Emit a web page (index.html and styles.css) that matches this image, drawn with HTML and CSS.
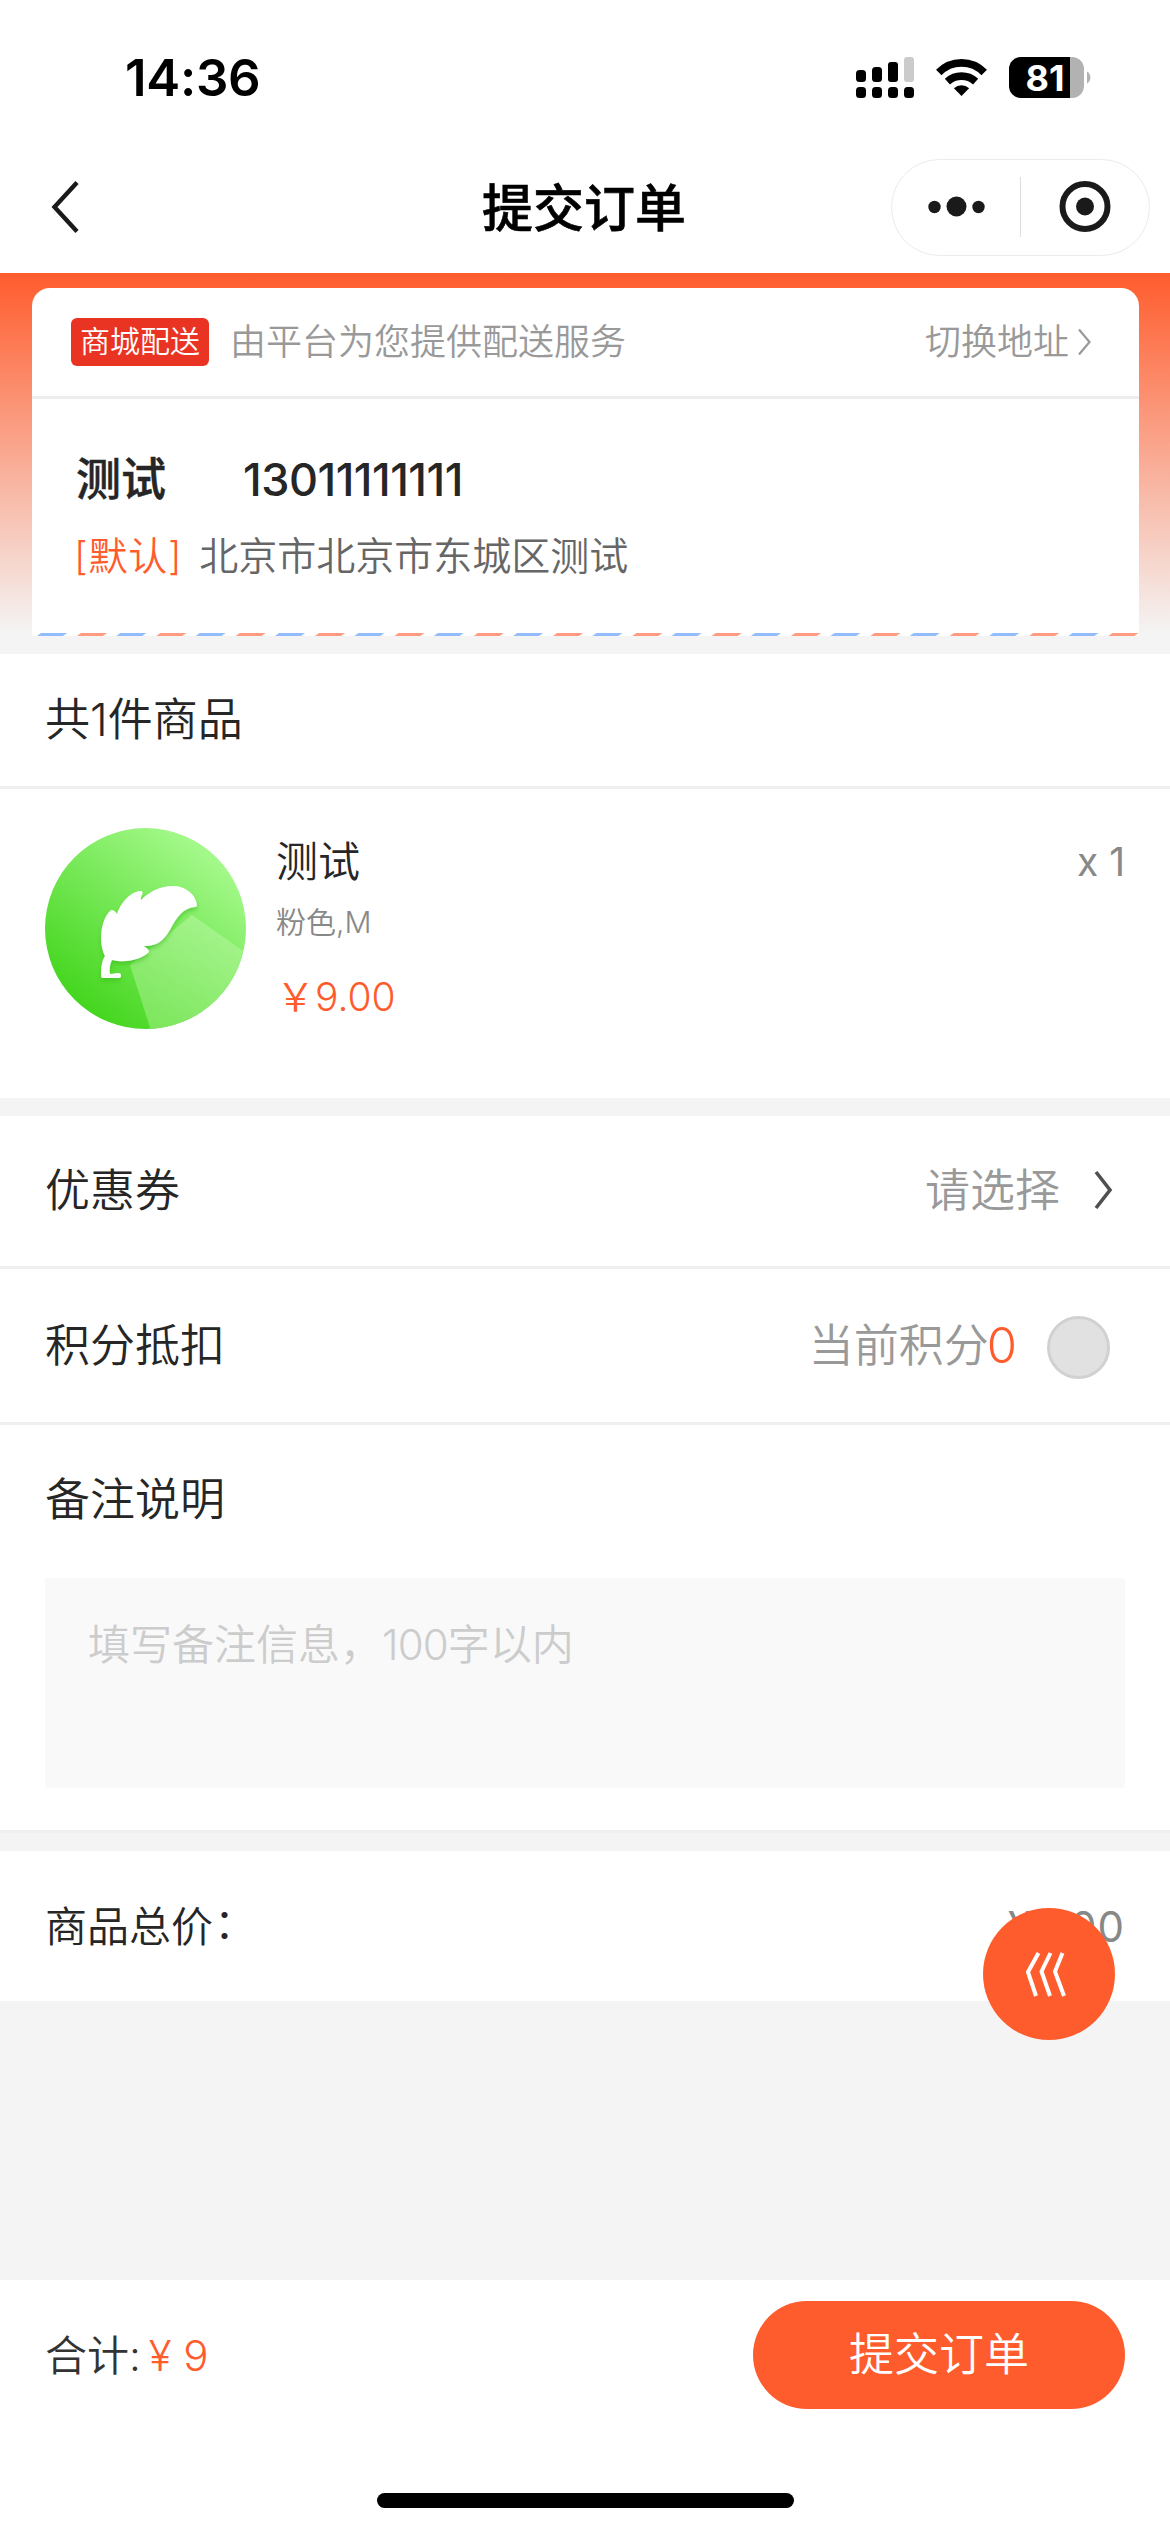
FILE: index.html
```html
<!DOCTYPE html>
<html lang="zh-CN">
<head>
<meta charset="utf-8">
<title>提交订单</title>
<link rel="stylesheet" href="styles.css">
</head>
<body>
<div class="page">
  <header class="top">
    <div class="status">
      <span class="time">14:36</span>
      <svg class="status-icons" width="240" height="50" viewBox="0 0 240 50">
        <g fill="#000">
          <rect x="4" y="17" width="10" height="12" rx="3.5"/>
          <rect x="20" y="14" width="10" height="15" rx="3.5"/>
          <rect x="36" y="9" width="10" height="20" rx="3"/>
          <rect x="52" y="4" width="10" height="25" rx="3" fill="#cbcbcb"/>
          <rect x="4" y="34" width="10" height="11" rx="3.5"/>
          <rect x="20" y="34" width="10" height="11" rx="3.5"/>
          <rect x="36" y="34" width="10" height="11" rx="3.5"/>
          <rect x="52" y="34" width="10" height="11" rx="3.5"/>
        </g>
        <g fill="none" stroke="#000" stroke-width="7.6">
          <path d="M86.800 19.500A31.500 31.500 0 0 1 132.200 19.500"/>
          <path d="M95.400 28.600A21 21 0 0 1 123.600 28.600"/>
        </g>
        <path d="M109.500 43l-7.600-7.800a11.600 11.600 0 0 1 15.200 0z"/>
        <clipPath id="cell"><rect x="157" y="4" width="75" height="41" rx="12"/></clipPath>
        <g clip-path="url(#cell)">
          <rect x="157" y="4" width="61" height="41"/>
          <rect x="218" y="4" width="14" height="41" fill="#b2b2b2"/>
        </g>
        <path d="M235 18.500a7 7 0 0 1 0 12z" fill="#b2b2b2"/>
        <text class="charge" x="193" y="38" text-anchor="middle">81</text>
      </svg>
    </div>
    <nav class="nav">
      <svg class="back" width="30" height="54" viewBox="0 0 30 54"><path d="M27 2.500L4.500 27L27 51.500" fill="none" stroke="#1a1a1a" stroke-width="4.400"/></svg>
      <h1 class="title">提交订单</h1>
      <div class="capsule">
        <svg width="128" height="60" viewBox="0 0 128 60" fill="#1a1a1a"><circle cx="42.500" cy="30" r="6.200"/><circle cx="64.500" cy="29.500" r="10"/><circle cx="86.500" cy="30" r="6.200"/></svg>
        <span class="capsule-line"></span>
        <svg width="127" height="60" viewBox="0 0 127 60"><circle cx="64" cy="29.500" r="22.500" fill="none" stroke="#1a1a1a" stroke-width="6"/><circle cx="64" cy="29.500" r="9" fill="#1a1a1a"/></svg>
      </div>
    </nav>
  </header>

  <section class="address-area">
    <div class="address-card">
      <div class="delivery">
        <span class="badge">商城配送</span>
        <span class="delivery-text">由平台为您提供配送服务</span>
        <span class="switch">切换地址</span>
        <svg class="switch-arrow" width="14" height="28" viewBox="0 0 14 28"><path d="M1 1.500L11.500 14L1 26.500" fill="none" stroke="#999" stroke-width="2.200"/></svg>
      </div>
      <div class="contact"><span class="name">测试</span><span class="phone">13011111111</span></div>
      <div class="address"><span class="default">[默认]</span><span>北京市北京市东城区测试</span></div>
      <svg class="mail-edge" width="1107" height="3" viewBox="0 0 1107 3">
        <defs><pattern id="mail" x="5" width="79.340" height="3" patternUnits="userSpaceOnUse">
          <path d="M4 0H30L26 3H0z" fill="#92bcfc"/><path d="M44 0H70L66 3H40z" fill="#ff9b81"/>
        </pattern></defs>
        <rect x="5" width="1102" height="3" fill="url(#mail)"/>
      </svg>
    </div>
  </section>

  <section class="goods-head">共1件商品</section>
  <section class="goods">
    <svg class="goods-pic" width="201" height="201" viewBox="0 0 201 201">
      <defs>
        <linearGradient id="green" x1=".15" y1=".85" x2=".75" y2=".1"><stop offset="0" stop-color="#45d61f"/><stop offset="1" stop-color="#a2f888"/></linearGradient>
        <linearGradient id="shade" x1=".2" y1="1" x2=".8" y2="0"><stop offset="0" stop-color="#7ce65c"/><stop offset="1" stop-color="#a8f590"/></linearGradient>
        <clipPath id="disc"><circle cx="100.500" cy="100.500" r="100.500"/></clipPath>
        <filter id="soft" x="-20%" y="-20%" width="140%" height="140%"><feDropShadow dx="0" dy="3" stdDeviation="2" flood-color="#2fb313" flood-opacity=".5"/></filter>
      </defs>
      <circle cx="100.500" cy="100.500" r="100.500" fill="url(#green)"/>
      <path clip-path="url(#disc)" d="M147 87L201 125V201H105.500L85 137z" fill="url(#shade)"/>
      <path class="leaf" filter="url(#soft)" d="M152 77C151 66 140 58 128 58C115 58 104 64 96 72C95 69 99 66 97 63C88 62 76 73 72 86C71 84 69 82 66 82C59 88 56 100 56 110C56 118 58 124 60 128C56 134 56 142 56 148Q56 150 58 150H74Q76 150 76 148V147Q76 145 73 145L65 146C64 141 65 136 67 132C83 136 98 130 104 124C104 121 101 120 99 118C110 119 119 113 125 102C132 89 138 80 150 79Q152 79 152 77z" fill="#fff"/>
    </svg>
    <div class="goods-info">
      <div class="goods-name">测试</div>
      <div class="goods-spec">粉色,M</div>
      <div class="goods-price">￥9.00</div>
    </div>
    <div class="goods-count">x 1</div>
  </section>

  <section class="row coupon"><span>优惠券</span><span class="hint">请选择</span>
    <svg class="row-arrow" width="20" height="42" viewBox="0 0 20 42"><path d="M3 3L17 21L3 39" fill="none" stroke="#505050" stroke-width="3.600"/></svg>
  </section>
  <section class="row points"><span>积分抵扣</span><span class="hint">当前积分</span><span class="zero">0</span><span class="radio"></span></section>
  <section class="remark">
    <div class="remark-title">备注说明</div>
    <div class="remark-box">填写备注信息，<span class="limit">100</span>字以内</div>
  </section>
  <section class="total"><span>商品总价<span class="colon">：</span></span><span class="total-price">¥9.00</span>
    <div class="fab"><svg width="44" height="50" viewBox="0 0 44 50" fill="none" stroke="#fff" stroke-width="4" stroke-linejoin="round"><path d="M14.500 4L4 23L12 47M26.500 4L17.500 22.500L26 47M38.500 4L31 22.500L40 47"/></svg></div>
  </section>
  <div class="blank"></div>
  <footer class="bottom">
    <div class="checkout"><span class="sum">合计:</span><span class="sum-price">¥ 9</span><span class="submit">提交订单</span></div>
    <div class="home"></div>
  </footer>
</div>
</body>
</html>
```
FILE: styles.css
```css
* { box-sizing: border-box; }
body { margin: 0; background: #f4f4f4; }
.page {
  width: 1170px;
  height: 2532px;
  display: flex;
  flex-direction: column;
  font-family: Inter, "Noto Sans CJK SC", sans-serif;
  font-weight: 350;
  font-size: 45px;
  line-height: 60px;
  color: #262626;
  white-space: nowrap;
}
.page > * { flex: none; }
.top { height: 273px; background: #fff; }
.status { height: 156px; display: flex; padding: 48px 78px 0 125px; justify-content: space-between; }
.time { font-size: 51px; font-weight: 600; color: #000; letter-spacing: -.3px; }
.status-icons { margin-top: 5px; }
.charge { font-size: 36px; font-weight: 700; fill: #fff; }
.nav { height: 102px; display: flex; align-items: center; padding: 0 20px 0 50px; }
.title { margin: 3px 0 0 402px; font-size: 51px; font-weight: 500; color: #000; -webkit-text-stroke: .6px #000; }
.capsule { margin-left: auto; width: 259px; height: 97px; border: 1px solid #ebebeb; border-radius: 49px; display: flex; align-items: center; }
.capsule-line { width: 1px; height: 60px; background: #dedede; }

.address-area { height: 381px; padding: 15px 31px 0 32px; background: linear-gradient(#ff5c2d 0, #f4f4f4 360px); }
.address-card { height: 348px; background: #fff; border-radius: 18px 18px 0 0; display: flex; flex-direction: column; }
.delivery { height: 111px; border-bottom: 3px solid #ededed; display: flex; align-items: center; padding: 0 47px 0 39px; font-size: 36px; color: #999; }
.badge { width: 138px; height: 48px; border-radius: 6px; background: #e93323; color: #fff; font-size: 30px; line-height: 46px; text-align: center; }
.delivery-text { margin-left: 21px; }
.switch { margin-left: auto; }
.switch-arrow { margin-left: 9px; }
.contact { height: 93px; padding: 51px 0 0 44px; font-weight: 500; line-height: 60px; display: flex; }
.name { -webkit-text-stroke: .5px #262626; }
.phone { margin-left: 77px; font-weight: 550; letter-spacing: -.5px; }
.address { padding: 34px 0 0 42px; font-size: 39px; color: #666; display: flex; }
.default { color: #ff5c2d; margin-right: 17px; letter-spacing: .8px; }
.mail-edge { margin-top: auto; display: block; }

.goods-head { height: 135px; padding: 36px 45px 0; background: #fff; border-bottom: 3px solid #efefef; }
.goods { height: 309px; padding: 39px 45px 0; background: #fff; display: flex; }
.goods-info { margin-left: 30px; }
.goods-name { font-size: 42px; margin-top: 4px; }
.goods-spec { font-size: 30px; color: #888; }
.goods-price { font-size: 39px; color: #ff5c2d; margin-top: 15px; }
.goods-count { margin-left: auto; margin-top: 4px; font-size: 39px; font-weight: 400; color: #888; }

.row { background: #fff; border-bottom: 3px solid #efefef; display: flex; align-items: center; padding: 0 57px 0 45px; }
.coupon { margin-top: 18px; height: 153px; padding-bottom: 1px; }
.hint { margin-left: auto; color: #999; }
.row-arrow { margin: -2px 0 0 33px; }
.points { height: 156px; padding-right: 60px; }
.zero { font-size: 49px; color: #ff5c2d; margin-left: -2px; }
.radio { width: 63px; height: 63px; border: 3px solid #d1d1d1; border-radius: 50%; background: #e1e1e1; margin: 3px 0 0 30px; }
.remark { height: 408px; background: #fff; border-bottom: 3px solid #efefef; padding: 45px 45px 0; }
.remark-box { margin-top: 48px; height: 210px; border-radius: 3px; background: #f9f9f9; padding: 37px 43px; font-size: 42px; color: #ccc; }
.limit { letter-spacing: -.9px; }
.total { position: relative; margin-top: 18px; height: 150px; padding: 1px 46px 0 45px; display: flex; align-items: center; justify-content: space-between; background: #fff; font-size: 42px; }
.colon { display: inline-block; line-height: 40px; vertical-align: 3px; padding-left: 1px; }
.total-price { color: #888; font-weight: 400; letter-spacing: 1px; margin-right: -1px; }
.fab { position: absolute; left: 983px; top: 57px; width: 132px; height: 132px; border-radius: 50%; background: #ff5c2d; display: flex; align-items: center; justify-content: center; padding-right: 6px; }
.blank { height: 279px; }
.bottom { height: 252px; background: #fff; }
.checkout { height: 150px; padding: 0 45px; display: flex; align-items: center; font-size: 42px; }
.sum { color: #333; margin-top: 2px; }
.sum-price { color: #ff5c2d; margin: 2px 0 0 8px; }
.submit { margin-left: auto; width: 372px; height: 108px; border-radius: 54px; background: #ff5c2d; color: #fff; font-size: 45px; line-height: 108px; text-align: center; }
.home { width: 417px; height: 15px; border-radius: 8px; background: #000; margin: 63px auto 0; }
```
